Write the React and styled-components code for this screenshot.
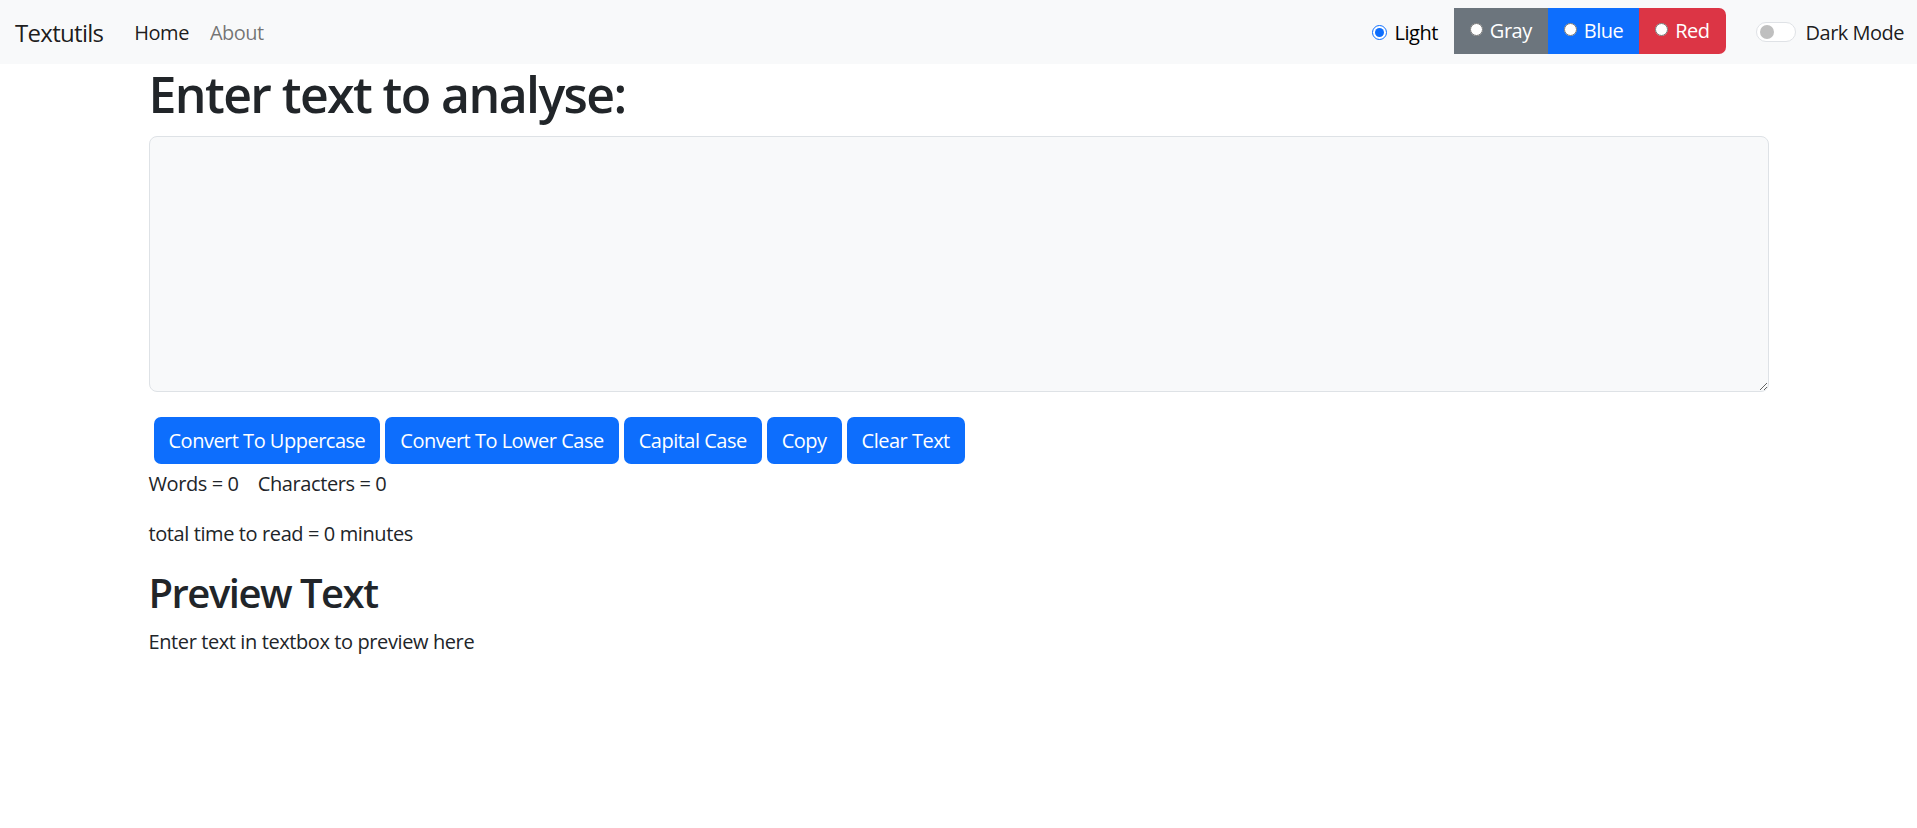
import React, {useState} from 'react';
import styled, {createGlobalStyle} from 'styled-components';

/*==================== GLOBAL ====================*/
const GlobalStyle = createGlobalStyle`
  body {
    margin: 0;
    background: #fff;
    color: #212529;
    font-family: "Open Sans", "Noto Sans", sans-serif;
  }
  * { box-sizing: border-box; }
`;

const themes = [
  {name: 'Gray', bg: '#6c757d'},
  {name: 'Blue', bg: '#0d6efd'},
  {name: 'Red', bg: '#dc3545'},
];

const actions = ['Convert To Uppercase', 'Convert To Lower Case', 'Capital Case', 'Copy', 'Clear Text'];

function App() {

  /*----- STATE HOOKS -----*/
  const [text, setText] = useState('');
  const [dark, setDark] = useState(false);

  const words = text.split(/\s+/).filter((w) => w.length !== 0).length;
  const minutes = 0.008 * words;

  /*----- RENDERER -----*/
  return (
    <>
      <GlobalStyle />
      <Navbar>
        <Brand href="#">Textutils</Brand>
        <NavLink href="#" $active>Home</NavLink>
        <NavLink href="#">About</NavLink>

        <NavRight>
          <RadioLabel>
            <Radio type="radio" name="mode" defaultChecked />
            Light
          </RadioLabel>
          <ThemeGroup>
            {themes.map((t) => (
              <ThemeOption key={t.name} $bg={t.bg}>
                <ThemeRadio type="radio" name="mode" />
                {t.name}
              </ThemeOption>
            ))}
          </ThemeGroup>
          <SwitchLabel>
            <Switch $on={dark} onClick={() => setDark(!dark)}><Knob $on={dark} /></Switch>
            Dark Mode
          </SwitchLabel>
        </NavRight>
      </Navbar>

      <Main>
        <Title>Enter text to analyse:</Title>
        <TextBox rows={8} value={text} onChange={(e) => setText(e.target.value)} />
        <ButtonRow>
          {actions.map((a) => <ActionButton key={a}>{a}</ActionButton>)}
        </ButtonRow>
        <Stats>Words = {words}&nbsp;&nbsp;&nbsp; Characters = {text.length}</Stats>
        <Para>total time to read = {minutes} minutes</Para>
        <SubTitle>Preview Text</SubTitle>
        <Para>{text.length > 0 ? text : 'Enter text in textbox to preview here'}</Para>
      </Main>
    </>
  );
}

/*==================== EXPORTS ====================*/
export default App;


const Navbar = styled.nav`
  height: 64px;
  background: #f8f9fa;
  display: flex;
  align-items: center;
  padding: 0 13px 0 15px;
`;

const Brand = styled.a`
  font-size: 24px;
  color: rgba(0, 0, 0, 0.9);
  text-decoration: none;
  margin-right: 31px;
  letter-spacing: -0.7px;
`;

const NavLink = styled.a`
  font-size: 20px;
  color: ${(p) => (p.$active ? 'rgba(0,0,0,0.9)' : 'rgba(0,0,0,0.55)')};
  text-decoration: none;
  margin-right: 21px;
  letter-spacing: -0.5px;
`;

const NavRight = styled.div`
  margin-left: auto;
  display: flex;
  align-items: center;
  font-size: 20px;
  letter-spacing: -0.5px;
`;

const RadioLabel = styled.label`
  display: flex;
  align-items: center;
  gap: 8px;
  margin-right: 16px;
  color: #000;
`;

const Radio = styled.input`
  width: 15px;
  height: 15px;
  margin: 0;
  accent-color: #0d6efd;
`;

const ThemeGroup = styled.div`
  display: flex;
  height: 46px;
  margin-top: -3px;
`;

const ThemeOption = styled.label`
  display: flex;
  align-items: center;
  gap: 7px;
  padding: 0 16px;
  background: ${(p) => p.$bg};
  color: #fff;
  &:last-child {
    border-radius: 0 7px 7px 0;
  }
`;

const ThemeRadio = styled.input`
  width: 13px;
  height: 13px;
  margin: 0 0 3px;
`;

const SwitchLabel = styled.label`
  display: flex;
  align-items: center;
  gap: 10px;
  margin-left: 30px;
  color: rgba(0, 0, 0, 0.9);
`;

const Switch = styled.span`
  width: 40px;
  height: 20px;
  border-radius: 10px;
  border: 1px solid #dfe2e6;
  background: ${(p) => (p.$on ? '#0d6efd' : '#fff')};
  display: flex;
  align-items: center;
  padding: 0 3px;
  justify-content: ${(p) => (p.$on ? 'flex-end' : 'flex-start')};
`;

const Knob = styled.span`
  width: 14px;
  height: 14px;
  border-radius: 50%;
  background: ${(p) => (p.$on ? '#fff' : '#bfbfbf')};
`;

const Main = styled.main`
  width: 1620px;
  margin: 0 auto;
`;

const Title = styled.h1`
  font-size: 50px;
  font-weight: 600;
  line-height: 60px;
  margin: 0 0 12px;
  letter-spacing: -1.6px;
`;

const TextBox = styled.textarea`
  display: block;
  width: 100%;
  height: 256px;
  background: #f8f9fa;
  border: 1px solid #dee2e6;
  border-radius: 8px;
  padding: 8px 15px;
  font: inherit;
  font-size: 20px;
  resize: vertical;
  outline: none;
`;

const ButtonRow = styled.div`
  display: flex;
  gap: 5px;
  margin: 25px 0 5px 5px;
`;

const ActionButton = styled.button`
  height: 47px;
  padding: 0 15px;
  background: #0d6efd;
  color: #fff;
  border: none;
  border-radius: 7px;
  font-family: inherit;
  font-size: 20px;
  letter-spacing: -0.5px;
  cursor: pointer;
`;

const Stats = styled.p`
  font-size: 20px;
  line-height: 30px;
  margin: 0 0 20px;
  letter-spacing: -0.4px;
`;

const Para = styled(Stats)``;

const SubTitle = styled.h2`
  font-size: 40px;
  font-weight: 600;
  line-height: 48px;
  margin: 0 0 10px;
  letter-spacing: -1.5px;
`;
